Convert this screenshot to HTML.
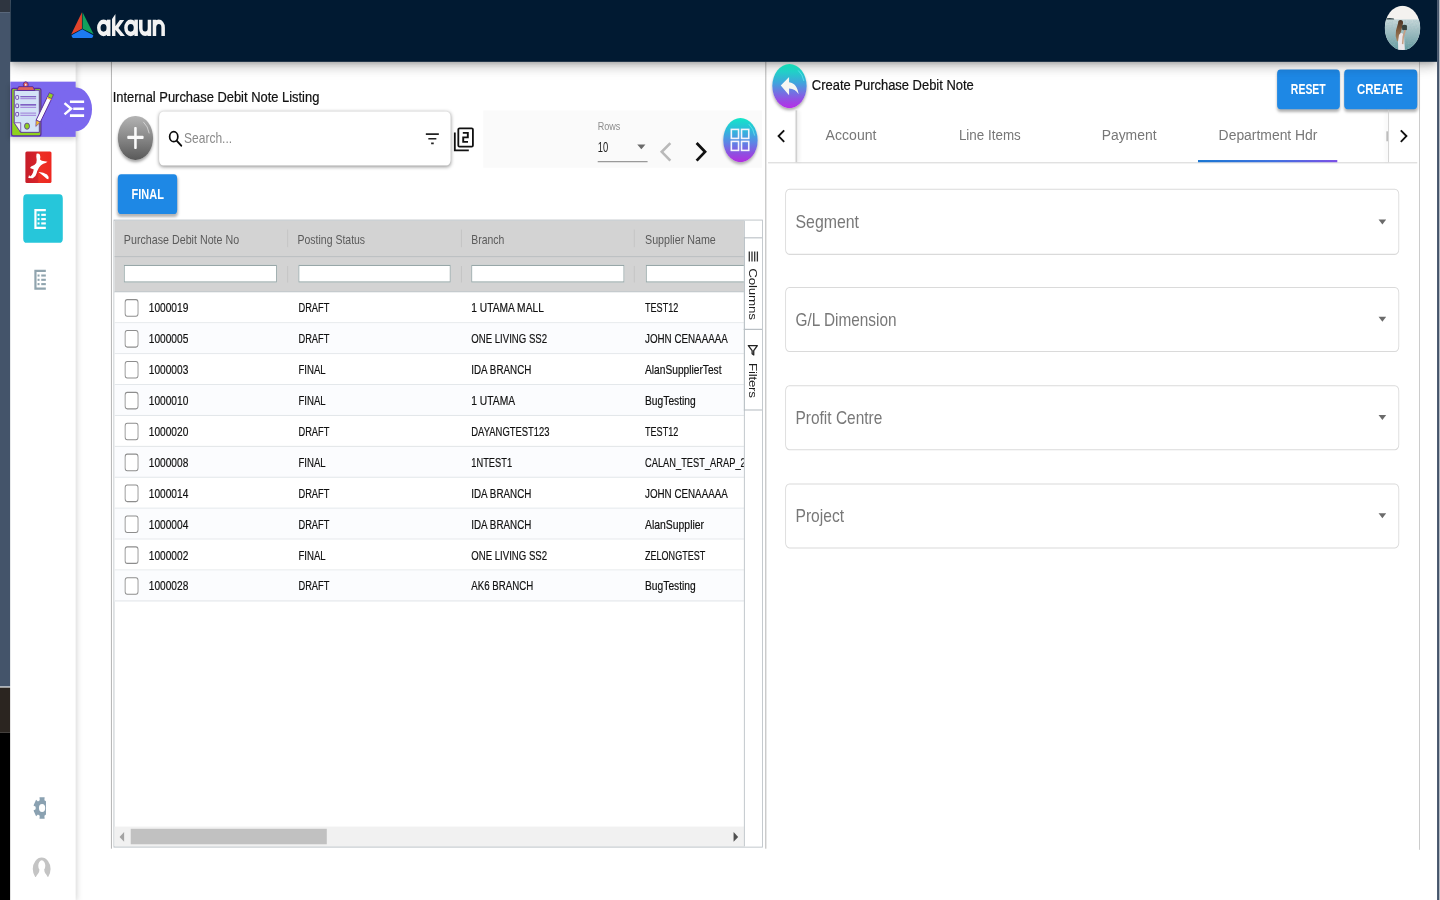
<!DOCTYPE html>
<html lang="en">
<head>
<meta charset="utf-8">
<title>Internal Purchase Debit Note Listing</title>
<style>
*{--x:initial;--y:initial;--w:initial;--h:initial;box-sizing:border-box}
html,body{margin:0;padding:0;width:1440px;height:900px;overflow:hidden;background:#fff;font-family:"Liberation Sans",sans-serif;color:#111}
#root{position:absolute;left:0;top:0;width:calc(1440px/.86);height:calc(900px/1.1036);transform:scale(.86,1.1036);transform-origin:0 0;--sx:.86;--sy:1.1036;overflow:hidden;background:#fff}
.p{position:absolute;left:calc(var(--x)*1px/var(--sx));top:calc(var(--y)*1px/var(--sy));width:calc(var(--w)*1px/var(--sx));height:calc(var(--h)*1px/var(--sy))}
.t{position:absolute;left:calc(var(--x)*1px/var(--sx));top:calc(var(--y)*1px/var(--sy));white-space:nowrap;line-height:1;transform-origin:0 0}
svg{display:block;overflow:visible}
.hdr{background:#011a32;box-shadow:0 3px 5px -1px rgba(0,0,0,.2),0 6px 10px 0 rgba(0,0,0,.14),0 1px 18px 0 rgba(0,0,0,.12);z-index:5;clip-path:inset(0 0 -24px 0)}
.side{background:#fff;box-shadow:1px 0 6px rgba(0,0,0,.16);z-index:3;clip-path:inset(0 -14px 0 0)}
.z4{z-index:4}.z6{z-index:6}
.vline{background:#a9a9a9}
.btn{background:#1e88e5;border-radius:4px;box-shadow:0 2px 3px rgba(0,0,0,.3)}
.fld{border:1px solid #dadada;border-radius:5px;background:#fff}
.row{border-bottom:1px solid #e3e7ea;background:#fff}
.row.alt{background:#fbfcfe}
.cb{border:1px solid #8d8d8d;border-radius:3px;background:#fff}
.fi{background:#fff;border:1px solid #95a5a6}
</style>
</head>
<body>
<div id="root">
<!-- window-edge strips -->
<div class="p" style="--x:0;--y:0;--w:10;--h:12;background:#2e3540"></div>
<div class="p" style="--x:0;--y:12;--w:10;--h:675;background:#44546a"></div>
<div class="p" style="--x:0;--y:687;--w:10;--h:46;background:#2b2520"></div>
<div class="p" style="--x:0;--y:733;--w:10;--h:167;background:#000"></div>
<div class="p" style="--x:1437;--y:0;--w:3;--h:900;background:#44546a"></div>
<!-- header / sidebar / dividers -->
<div id="hdr" class="p hdr" style="--x:10;--y:0;--w:1427;--h:62;"></div>
<div id="side" class="p side" style="--x:10;--y:62;--w:65.5;--h:838;"></div>
<div class="p vline" style="--x:111;--y:62;--w:1;--h:787;"></div>
<div class="p vline" style="--x:765;--y:62;--w:1.2;--h:787;"></div>
<div class="p" style="--x:1419;--y:62;--w:1;--h:788;background:#c4c4c4"></div>
<!-- ===== LIST PANEL TOOLBAR ===== -->
<span id="title" class="t" style="--x:112.8;--y:89.48;font-size:13.3px;font-weight:400;color:#111;letter-spacing:0px;transform:scaleX(1.1288);-webkit-text-stroke:.2px #111">Internal Purchase Debit Note Listing</span>
<div class="p" style="--x:483.5;--y:110.8;--w:278.5;--h:57.2;background:#fafafa"></div>
<div id="plus" class="p" style="--x:118.1;--y:115.6;--w:34.7;--h:44.2;border-radius:50%;background:linear-gradient(180deg,#b4b4b4 0%,#8c8c8c 45%,#595959 100%);box-shadow:0 2px 3px rgba(0,0,0,.35)"></div>
<div class="p" style="--x:126.9;--y:135.9;--w:17.1;--h:3.7;background:#fafafa;border-radius:1px"></div>
<div class="p" style="--x:133.9;--y:126.7;--w:3.2;--h:22.1;background:#fafafa;border-radius:1px"></div>
<svg class="p" style="--x:118.1;--y:115.6;--w:34.7;--h:44.2" viewBox="0 0 34.7 44.2" preserveAspectRatio="none"><path d="M25.5 6 Q30.3 10.5 31.4 17.5" fill="none" stroke="#e6e6e6" stroke-width=".9" opacity=".75"/></svg>
<div id="search" class="p" style="--x:158.8;--y:111.3;--w:291.7;--h:54;background:#fff;border-radius:5px;box-shadow:0 1px 4px rgba(0,0,0,.42)"></div>
<svg class="p" style="--x:167;--y:129;--w:16;--h:18" viewBox="0 0 16 18" preserveAspectRatio="none"><ellipse cx="6.9" cy="7.6" rx="4.1" ry="5" fill="none" stroke="#0b0b0b" stroke-width="1.7"/><path d="M9.8 11.6 L14.4 16.6" stroke="#0b0b0b" stroke-width="1.9" stroke-linecap="round"/></svg>
<span id="srch" class="t" style="--x:184.3;--y:130.99;font-size:13.2px;font-weight:400;color:#8a8a8a;letter-spacing:0px;transform:scaleX(1.0586);">Search...</span>
<svg class="p" style="--x:425;--y:132;--w:15;--h:13" viewBox="0 0 15 13" preserveAspectRatio="none"><path d="M1 1.6H14M3.5 6.3H11.5M6.3 11H8.9" stroke="#222" stroke-width="1.7" fill="none"/></svg>
<svg class="p" style="--x:453;--y:127;--w:21;--h:26" viewBox="0 0 21 26" preserveAspectRatio="none"><path d="M1.6 5.5V23.4H15.6" fill="none" stroke="#111" stroke-width="1.8"/><rect x="5.1" y="1.4" width="14.6" height="18.3" rx="1.2" fill="none" stroke="#111" stroke-width="1.8"/><path d="M9.6 6H14.6V10.5H10V15H14.8" fill="none" stroke="#111" stroke-width="1.9"/></svg>
<span id="rows" class="t" style="--x:597.4;--y:121.53;font-size:9.8px;font-weight:400;color:#8c8c8c;letter-spacing:0px;transform:scaleX(1.0741);">Rows</span>
<span id="ten" class="t" style="--x:597.6;--y:140.11;font-size:13px;font-weight:400;color:#222;letter-spacing:0px;transform:scaleX(0.8389);">10</span>
<svg class="p" style="--x:637.3;--y:145;--w:8.2;--h:4.8" viewBox="0 0 10 5" preserveAspectRatio="none"><path d="M0 0H10L5 5Z" fill="#6a6a6a"/></svg>
<div class="p" style="--x:598;--y:160.6;--w:50;--h:1.1;background:#8d8d8d"></div>
<svg class="p" style="--x:659;--y:141;--w:14;--h:21" viewBox="0 0 14 21" preserveAspectRatio="none"><path d="M11.6 1.8 L3 10.6 L11.6 19.4" fill="none" stroke="#b9b9b9" stroke-width="2.6"/></svg>
<svg class="p" style="--x:694;--y:141;--w:14;--h:21" viewBox="0 0 14 21" preserveAspectRatio="none"><path d="M2.6 1.8 L11 10.6 L2.6 19.4" fill="none" stroke="#111" stroke-width="2.8"/></svg>
<div id="gfab" class="p" style="--x:723.1;--y:118.6;--w:34.4;--h:44;border-radius:50%;background:linear-gradient(180deg,#12e6c8 0%,#2fb9dc 28%,#5b86e5 55%,#8f4fe0 80%,#b32ee0 100%);box-shadow:0 2px 3px rgba(0,0,0,.3)"></div>
<svg class="p" style="--x:730.5;--y:128.5;--w:20;--h:24" viewBox="0 0 20 24" preserveAspectRatio="none"><g fill="none" stroke="#f4f4fb" stroke-width="1.6"><rect x="1.2" y="1.4" width="7.2" height="9"/><rect x="11.4" y="1.4" width="7.2" height="9"/><rect x="1.2" y="13.4" width="7.2" height="9"/><rect x="11.4" y="13.4" width="7.2" height="9"/></g></svg>
<svg class="p" style="--x:723.1;--y:118.6;--w:34.4;--h:44" viewBox="0 0 34.4 44" preserveAspectRatio="none"><path d="M25.5 6 Q30.3 10.5 31.4 17.5" fill="none" stroke="#7af0f0" stroke-width=".9" opacity=".7"/></svg>
<div id="final" class="p btn" style="--x:117.4;--y:174.4;--w:59.9;--h:39.4;"></div>
<span id="finalt" class="t" style="--x:131.2;--y:186.58;font-size:13.3px;font-weight:700;color:#fff;letter-spacing:0px;transform:scaleX(0.9579);">FINAL</span>
<!-- ===== GRID ===== -->
<div id="grid" class="p" style="--x:113.4;--y:219.8;--w:649.4;--h:628;border:1px solid #b9bfc4;background:#fff"></div>
<div id="gbody" class="p" style="--x:114.3;--y:220.7;--w:630.2;--h:626;overflow:hidden">
<div class="p" style="--x:0;--y:0;--w:631;--h:70.8;background:#d3d3d3"></div>
<div class="p" style="--x:0;--y:35.6;--w:631;--h:1;background:#bcc0c3"></div>
<div class="p" style="--x:0;--y:70.2;--w:631;--h:1.2;background:#aeb5bb"></div>
<div class="p" style="--x:172.7;--y:9.3;--w:1;--h:16.8;background:#c3c3c3"></div>
<div class="p" style="--x:172.7;--y:45.3;--w:1;--h:16.2;background:#c3c3c3"></div>
<div class="p" style="--x:346.45;--y:9.3;--w:1;--h:16.8;background:#c3c3c3"></div>
<div class="p" style="--x:346.45;--y:45.3;--w:1;--h:16.2;background:#c3c3c3"></div>
<div class="p" style="--x:519.7;--y:9.3;--w:1;--h:16.8;background:#c3c3c3"></div>
<div class="p" style="--x:519.7;--y:45.3;--w:1;--h:16.2;background:#c3c3c3"></div>
<span id="gh0" class="t" style="--x:9.9;--y:11.9;font-size:12.3px;font-weight:400;color:#5a5a5a;letter-spacing:0px;transform:scaleX(1.0110);">Purchase Debit Note No</span>
<span id="gh1" class="t" style="--x:183.65;--y:11.9;font-size:12.3px;font-weight:400;color:#5a5a5a;letter-spacing:0px;transform:scaleX(0.9904);">Posting Status</span>
<span id="gh2" class="t" style="--x:357.4;--y:11.9;font-size:12.3px;font-weight:400;color:#5a5a5a;letter-spacing:0px;transform:scaleX(0.9860);">Branch</span>
<span id="gh3" class="t" style="--x:530.9;--y:11.9;font-size:12.3px;font-weight:400;color:#5a5a5a;letter-spacing:0px;transform:scaleX(1.0120);">Supplier Name</span>
<div class="p fi" style="--x:9.95;--y:44.5;--w:152.5;--h:17.8;"></div>
<div class="p fi" style="--x:183.95;--y:44.5;--w:152.5;--h:17.8;"></div>
<div class="p fi" style="--x:356.95;--y:44.5;--w:153.25;--h:17.8;"></div>
<div class="p fi" style="--x:531.2;--y:44.5;--w:152.5;--h:17.8;"></div>
<div class="p row" style="--x:0;--y:71.5;--w:631;--h:30.9;"><div class="p cb" style="--x:10.2;--y:6.9;--w:13.8;--h:17.6;"></div><span id="c0_0" class="t" style="--x:34.55;--y:9.6;font-size:12.3px;font-weight:400;color:#101010;letter-spacing:0px;transform:scaleX(0.9604);-webkit-text-stroke:.18px #101010">1000019</span><span id="c0_1" class="t" style="--x:183.8;--y:9.6;font-size:12.3px;font-weight:400;color:#101010;letter-spacing:0px;transform:scaleX(0.8804);-webkit-text-stroke:.18px #101010">DRAFT</span><span id="c0_2" class="t" style="--x:357.3;--y:9.6;font-size:12.3px;font-weight:400;color:#101010;letter-spacing:0px;transform:scaleX(0.9668);-webkit-text-stroke:.18px #101010">1 UTAMA MALL</span><span id="c0_3" class="t" style="--x:530.8;--y:9.6;font-size:12.3px;font-weight:400;color:#101010;letter-spacing:0px;transform:scaleX(0.8582);-webkit-text-stroke:.18px #101010">TEST12</span></div>
<div class="p row alt" style="--x:0;--y:102.4;--w:631;--h:30.9;"><div class="p cb" style="--x:10.2;--y:6.9;--w:13.8;--h:17.6;"></div><span id="c1_0" class="t" style="--x:34.55;--y:9.6;font-size:12.3px;font-weight:400;color:#101010;letter-spacing:0px;transform:scaleX(0.9604);-webkit-text-stroke:.18px #101010">1000005</span><span id="c1_1" class="t" style="--x:183.8;--y:9.6;font-size:12.3px;font-weight:400;color:#101010;letter-spacing:0px;transform:scaleX(0.8804);-webkit-text-stroke:.18px #101010">DRAFT</span><span id="c1_2" class="t" style="--x:357.3;--y:9.6;font-size:12.3px;font-weight:400;color:#101010;letter-spacing:0px;transform:scaleX(0.9081);-webkit-text-stroke:.18px #101010">ONE LIVING SS2</span><span id="c1_3" class="t" style="--x:530.8;--y:9.6;font-size:12.3px;font-weight:400;color:#101010;letter-spacing:0px;transform:scaleX(0.9268);-webkit-text-stroke:.18px #101010">JOHN CENAAAAA</span></div>
<div class="p row" style="--x:0;--y:133.3;--w:631;--h:30.9;"><div class="p cb" style="--x:10.2;--y:6.9;--w:13.8;--h:17.6;"></div><span id="c2_0" class="t" style="--x:34.55;--y:9.6;font-size:12.3px;font-weight:400;color:#101010;letter-spacing:0px;transform:scaleX(0.9604);-webkit-text-stroke:.18px #101010">1000003</span><span id="c2_1" class="t" style="--x:183.8;--y:9.6;font-size:12.3px;font-weight:400;color:#101010;letter-spacing:0px;transform:scaleX(0.9104);-webkit-text-stroke:.18px #101010">FINAL</span><span id="c2_2" class="t" style="--x:357.3;--y:9.6;font-size:12.3px;font-weight:400;color:#101010;letter-spacing:0px;transform:scaleX(0.9288);-webkit-text-stroke:.18px #101010">IDA BRANCH</span><span id="c2_3" class="t" style="--x:530.8;--y:9.6;font-size:12.3px;font-weight:400;color:#101010;letter-spacing:0px;transform:scaleX(0.9645);-webkit-text-stroke:.18px #101010">AlanSupplierTest</span></div>
<div class="p row alt" style="--x:0;--y:164.2;--w:631;--h:30.9;"><div class="p cb" style="--x:10.2;--y:6.9;--w:13.8;--h:17.6;"></div><span id="c3_0" class="t" style="--x:34.55;--y:9.6;font-size:12.3px;font-weight:400;color:#101010;letter-spacing:0px;transform:scaleX(0.9604);-webkit-text-stroke:.18px #101010">1000010</span><span id="c3_1" class="t" style="--x:183.8;--y:9.6;font-size:12.3px;font-weight:400;color:#101010;letter-spacing:0px;transform:scaleX(0.9104);-webkit-text-stroke:.18px #101010">FINAL</span><span id="c3_2" class="t" style="--x:357.3;--y:9.6;font-size:12.3px;font-weight:400;color:#101010;letter-spacing:0px;transform:scaleX(0.9720);-webkit-text-stroke:.18px #101010">1 UTAMA</span><span id="c3_3" class="t" style="--x:530.8;--y:9.6;font-size:12.3px;font-weight:400;color:#101010;letter-spacing:0px;transform:scaleX(0.9707);-webkit-text-stroke:.18px #101010">BugTesting</span></div>
<div class="p row" style="--x:0;--y:195.1;--w:631;--h:30.9;"><div class="p cb" style="--x:10.2;--y:6.9;--w:13.8;--h:17.6;"></div><span id="c4_0" class="t" style="--x:34.55;--y:9.6;font-size:12.3px;font-weight:400;color:#101010;letter-spacing:0px;transform:scaleX(0.9604);-webkit-text-stroke:.18px #101010">1000020</span><span id="c4_1" class="t" style="--x:183.8;--y:9.6;font-size:12.3px;font-weight:400;color:#101010;letter-spacing:0px;transform:scaleX(0.8804);-webkit-text-stroke:.18px #101010">DRAFT</span><span id="c4_2" class="t" style="--x:357.3;--y:9.6;font-size:12.3px;font-weight:400;color:#101010;letter-spacing:0px;transform:scaleX(0.8920);-webkit-text-stroke:.18px #101010">DAYANGTEST123</span><span id="c4_3" class="t" style="--x:530.8;--y:9.6;font-size:12.3px;font-weight:400;color:#101010;letter-spacing:0px;transform:scaleX(0.8582);-webkit-text-stroke:.18px #101010">TEST12</span></div>
<div class="p row alt" style="--x:0;--y:226.0;--w:631;--h:30.9;"><div class="p cb" style="--x:10.2;--y:6.9;--w:13.8;--h:17.6;"></div><span id="c5_0" class="t" style="--x:34.55;--y:9.6;font-size:12.3px;font-weight:400;color:#101010;letter-spacing:0px;transform:scaleX(0.9604);-webkit-text-stroke:.18px #101010">1000008</span><span id="c5_1" class="t" style="--x:183.8;--y:9.6;font-size:12.3px;font-weight:400;color:#101010;letter-spacing:0px;transform:scaleX(0.9104);-webkit-text-stroke:.18px #101010">FINAL</span><span id="c5_2" class="t" style="--x:357.3;--y:9.6;font-size:12.3px;font-weight:400;color:#101010;letter-spacing:0px;transform:scaleX(0.8784);-webkit-text-stroke:.18px #101010">1NTEST1</span><span id="c5_3" class="t" style="--x:530.8;--y:9.6;font-size:12.3px;font-weight:400;color:#101010;letter-spacing:0px;transform:scaleX(0.8794);-webkit-text-stroke:.18px #101010">CALAN_TEST_ARAP_2</span></div>
<div class="p row" style="--x:0;--y:256.9;--w:631;--h:30.9;"><div class="p cb" style="--x:10.2;--y:6.9;--w:13.8;--h:17.6;"></div><span id="c6_0" class="t" style="--x:34.55;--y:9.6;font-size:12.3px;font-weight:400;color:#101010;letter-spacing:0px;transform:scaleX(0.9604);-webkit-text-stroke:.18px #101010">1000014</span><span id="c6_1" class="t" style="--x:183.8;--y:9.6;font-size:12.3px;font-weight:400;color:#101010;letter-spacing:0px;transform:scaleX(0.8804);-webkit-text-stroke:.18px #101010">DRAFT</span><span id="c6_2" class="t" style="--x:357.3;--y:9.6;font-size:12.3px;font-weight:400;color:#101010;letter-spacing:0px;transform:scaleX(0.9288);-webkit-text-stroke:.18px #101010">IDA BRANCH</span><span id="c6_3" class="t" style="--x:530.8;--y:9.6;font-size:12.3px;font-weight:400;color:#101010;letter-spacing:0px;transform:scaleX(0.9268);-webkit-text-stroke:.18px #101010">JOHN CENAAAAA</span></div>
<div class="p row alt" style="--x:0;--y:287.8;--w:631;--h:30.9;"><div class="p cb" style="--x:10.2;--y:6.9;--w:13.8;--h:17.6;"></div><span id="c7_0" class="t" style="--x:34.55;--y:9.6;font-size:12.3px;font-weight:400;color:#101010;letter-spacing:0px;transform:scaleX(0.9604);-webkit-text-stroke:.18px #101010">1000004</span><span id="c7_1" class="t" style="--x:183.8;--y:9.6;font-size:12.3px;font-weight:400;color:#101010;letter-spacing:0px;transform:scaleX(0.8804);-webkit-text-stroke:.18px #101010">DRAFT</span><span id="c7_2" class="t" style="--x:357.3;--y:9.6;font-size:12.3px;font-weight:400;color:#101010;letter-spacing:0px;transform:scaleX(0.9288);-webkit-text-stroke:.18px #101010">IDA BRANCH</span><span id="c7_3" class="t" style="--x:530.8;--y:9.6;font-size:12.3px;font-weight:400;color:#101010;letter-spacing:0px;transform:scaleX(0.9845);-webkit-text-stroke:.18px #101010">AlanSupplier</span></div>
<div class="p row" style="--x:0;--y:318.7;--w:631;--h:30.9;"><div class="p cb" style="--x:10.2;--y:6.9;--w:13.8;--h:17.6;"></div><span id="c8_0" class="t" style="--x:34.55;--y:9.6;font-size:12.3px;font-weight:400;color:#101010;letter-spacing:0px;transform:scaleX(0.9604);-webkit-text-stroke:.18px #101010">1000002</span><span id="c8_1" class="t" style="--x:183.8;--y:9.6;font-size:12.3px;font-weight:400;color:#101010;letter-spacing:0px;transform:scaleX(0.9104);-webkit-text-stroke:.18px #101010">FINAL</span><span id="c8_2" class="t" style="--x:357.3;--y:9.6;font-size:12.3px;font-weight:400;color:#101010;letter-spacing:0px;transform:scaleX(0.9081);-webkit-text-stroke:.18px #101010">ONE LIVING SS2</span><span id="c8_3" class="t" style="--x:530.8;--y:9.6;font-size:12.3px;font-weight:400;color:#101010;letter-spacing:0px;transform:scaleX(0.8550);-webkit-text-stroke:.18px #101010">ZELONGTEST</span></div>
<div class="p row alt" style="--x:0;--y:349.6;--w:631;--h:30.9;"><div class="p cb" style="--x:10.2;--y:6.9;--w:13.8;--h:17.6;"></div><span id="c9_0" class="t" style="--x:34.55;--y:9.6;font-size:12.3px;font-weight:400;color:#101010;letter-spacing:0px;transform:scaleX(0.9604);-webkit-text-stroke:.18px #101010">1000028</span><span id="c9_1" class="t" style="--x:183.8;--y:9.6;font-size:12.3px;font-weight:400;color:#101010;letter-spacing:0px;transform:scaleX(0.8804);-webkit-text-stroke:.18px #101010">DRAFT</span><span id="c9_2" class="t" style="--x:357.3;--y:9.6;font-size:12.3px;font-weight:400;color:#101010;letter-spacing:0px;transform:scaleX(0.9179);-webkit-text-stroke:.18px #101010">AK6 BRANCH</span><span id="c9_3" class="t" style="--x:530.8;--y:9.6;font-size:12.3px;font-weight:400;color:#101010;letter-spacing:0px;transform:scaleX(0.9707);-webkit-text-stroke:.18px #101010">BugTesting</span></div>
<div class="p" style="--x:0;--y:605.5;--w:631;--h:20.5;background:#f1f1f1"></div>
<div id="thumb" class="p" style="--x:16.2;--y:608;--w:196.5;--h:15.8;background:#c1c1c1"></div>
<svg class="p" style="--x:5.5;--y:611;--w:4.6;--h:9.6" viewBox="0 0 5 10" preserveAspectRatio="none"><path d="M5 0V10L0 5Z" fill="#a3a3a3"/></svg>
<svg class="p" style="--x:619.6;--y:611;--w:4.6;--h:9.6" viewBox="0 0 5 10" preserveAspectRatio="none"><path d="M0 0V10L5 5Z" fill="#505050"/></svg>
</div>
<div class="p" style="--x:744.2;--y:220.7;--w:18;--h:626;border-left:1px solid #b9bfc4;background:#fff"></div>
<div class="p" style="--x:744.2;--y:237.8;--w:18;--h:92.6;border:1px solid #b9bfc4;border-right:0"></div>
<div class="p" style="--x:744.2;--y:329.4;--w:18;--h:81;border:1px solid #b9bfc4;border-right:0"></div>
<svg class="p" style="--x:748;--y:252;--w:10.4;--h:10" viewBox="0 0 10.4 10" preserveAspectRatio="none"><path d="M1.1 0V10M3.8 0V10M6.5 0V10M9.2 0V10" stroke="#333" stroke-width="1.3" fill="none"/></svg>
<span id="colt" class="t" style="--x:747.3;--y:268.2;font-size:12.2px;font-weight:400;color:#1d1d1d;letter-spacing:-0.2px;transform:scaleX(1.0000);writing-mode:vertical-rl">Columns</span>
<svg class="p" style="--x:747.6;--y:344.5;--w:11;--h:12" viewBox="0 0 11 12" preserveAspectRatio="none"><path d="M1 1.3H10L6.4 6.4V10.6L4.8 9.4V6.4Z" fill="none" stroke="#222" stroke-width="1.3" stroke-linejoin="round"/></svg>
<span id="filt" class="t" style="--x:747.3;--y:362.6;font-size:12.2px;font-weight:400;color:#1d1d1d;letter-spacing:-0.25px;transform:scaleX(1.0000);writing-mode:vertical-rl">Filters</span>
<!-- ===== RIGHT PANEL ===== -->
<div id="back" class="p z6" style="--x:772.6;--y:63.6;--w:34.5;--h:44.4;border-radius:50%;background:linear-gradient(180deg,#14dcb4 0%,#22cfc8 18%,#3ea6dc 42%,#6c78e2 62%,#9a48e4 84%,#b62ee8 100%);box-shadow:0 2px 3px rgba(0,0,0,.32)"></div>
<svg id="backi" class="p z6" style="--x:772.6;--y:63.8;--w:34.6;--h:44.2" viewBox="0 0 34.6 44.2" preserveAspectRatio="none"><path d="M8.5 21.6 L16.8 13 V18.2 C22.5 18.8 25.5 23.5 26.4 30.3 C24 26.5 21.2 24.7 16.8 24.5 V31.2 Z" fill="#f6f6f2"/><path d="M26 6.5 Q30.5 10.5 31.6 17" fill="none" stroke="#5fe6ee" stroke-width="1" opacity=".8"/></svg>
<span id="cpdn" class="t" style="--x:812.0;--y:78.48;font-size:13.3px;font-weight:400;color:#111;letter-spacing:0px;transform:scaleX(1.1325);-webkit-text-stroke:.2px #111">Create Purchase Debit Note</span>
<div id="reset" class="p btn" style="--x:1277;--y:69.5;--w:62.5;--h:39.3;"></div>
<div id="create" class="p btn" style="--x:1344.5;--y:69.5;--w:72.5;--h:39.3;"></div>
<span id="resett" class="t" style="--x:1290.9;--y:81.53;font-size:13.3px;font-weight:700;color:#fff;letter-spacing:0px;transform:scaleX(0.9140);">RESET</span>
<span id="createt" class="t" style="--x:1357.4;--y:81.53;font-size:13.3px;font-weight:700;color:#fff;letter-spacing:0px;transform:scaleX(0.9932);">CREATE</span>
<div class="p" style="--x:768;--y:162;--w:649;--h:1.1;background:#d9d9d9"></div>
<div class="p" style="--x:795.8;--y:110;--w:1;--h:52;background:#d0d0d0;box-shadow:2px 0 4px rgba(0,0,0,.12)"></div>
<svg class="p" style="--x:777;--y:129;--w:9;--h:14" viewBox="0 0 9 14" preserveAspectRatio="none"><path d="M7.6 1.2 L2 7 L7.6 12.8" fill="none" stroke="#111" stroke-width="1.9"/></svg>
<span id="tab0" class="t" style="--x:825.3;--y:128.45;font-size:13.5px;font-weight:400;color:#777;letter-spacing:0px;transform:scaleX(1.2126);">Account</span>
<span id="tab1" class="t" style="--x:959.1;--y:128.45;font-size:13.5px;font-weight:400;color:#777;letter-spacing:0px;transform:scaleX(1.1551);">Line Items</span>
<span id="tab2" class="t" style="--x:1101.6;--y:128.45;font-size:13.5px;font-weight:400;color:#777;letter-spacing:0px;transform:scaleX(1.1975);">Payment</span>
<span id="tab3" class="t" style="--x:1218.6;--y:128.45;font-size:13.5px;font-weight:400;color:#777;letter-spacing:0px;transform:scaleX(1.1970);">Department Hdr</span>
<div id="inkbar" class="p" style="--x:1198.25;--y:159.8;--w:139.25;--h:2.3;background:linear-gradient(90deg,#1976d2,#3f6fe0 55%,#7b4fe6)"></div>
<div class="p" style="--x:1388.3;--y:110;--w:1;--h:52;background:#d0d0d0;box-shadow:-2px 0 4px rgba(0,0,0,.12)"></div>
<div class="p" style="--x:1386.6;--y:131;--w:1.2;--h:10;background:#bdbdbd"></div>
<svg class="p" style="--x:1399.5;--y:129;--w:9;--h:14" viewBox="0 0 9 14" preserveAspectRatio="none"><path d="M1.6 1.2 L7.2 7 L1.6 12.8" fill="none" stroke="#111" stroke-width="1.9"/></svg>
<div class="p fld" style="--x:785.4;--y:189.25;--w:614.2;--h:65.3;"></div>
<span id="lbSeg" class="t" style="--x:795.2;--y:213.78;font-size:16.0px;font-weight:400;color:#787878;letter-spacing:0px;transform:scaleX(1.1534);">Segment</span>
<svg class="p" style="--x:1378.2;--y:219.25;--w:7.6;--h:5" viewBox="0 0 10 5" preserveAspectRatio="none"><path d="M0 0H10L5 5Z" fill="#6b6b6b"/></svg>
<div class="p fld" style="--x:785.4;--y:287;--w:614.2;--h:65.3;"></div>
<span id="lbGL" class="t" style="--x:795.2;--y:311.53;font-size:16.0px;font-weight:400;color:#787878;letter-spacing:0px;transform:scaleX(1.1164);">G/L Dimension</span>
<svg class="p" style="--x:1378.2;--y:317;--w:7.6;--h:5" viewBox="0 0 10 5" preserveAspectRatio="none"><path d="M0 0H10L5 5Z" fill="#6b6b6b"/></svg>
<div class="p fld" style="--x:785.4;--y:385.4;--w:614.2;--h:65.3;"></div>
<span id="lbPro" class="t" style="--x:795.2;--y:409.93;font-size:16.0px;font-weight:400;color:#787878;letter-spacing:0px;transform:scaleX(1.1236);">Profit Centre</span>
<svg class="p" style="--x:1378.2;--y:415.4;--w:7.6;--h:5" viewBox="0 0 10 5" preserveAspectRatio="none"><path d="M0 0H10L5 5Z" fill="#6b6b6b"/></svg>
<div class="p fld" style="--x:785.4;--y:483.2;--w:614.2;--h:65.3;"></div>
<span id="lbPro" class="t" style="--x:795.2;--y:507.73;font-size:16.0px;font-weight:400;color:#787878;letter-spacing:0px;transform:scaleX(1.1333);">Project</span>
<svg class="p" style="--x:1378.2;--y:513.2;--w:7.6;--h:5" viewBox="0 0 10 5" preserveAspectRatio="none"><path d="M0 0H10L5 5Z" fill="#6b6b6b"/></svg>
<!-- ===== HEADER CONTENT ===== -->
<svg id="tri" class="p z6" style="--x:70;--y:11;--w:26;--h:28" viewBox="0 0 26 28" preserveAspectRatio="none"><path d="M12.3 1.2 L1.5 23.5 L12.3 17.6 Z" fill="#e0452c"/><path d="M12.9 1.2 L24 23.3 L12.9 17.6 Z" fill="#12a05c"/><path d="M12.6 18.1 L1.9 24.2 Q2.1 27.1 4.6 27.1 H21 Q23.5 27.1 23.6 24.2 Z" fill="#1d7bf2"/></svg>
<svg class="p z6" style="--x:96;--y:12;--w:70;--h:26" viewBox="0 0 81.40 23.56" preserveAspectRatio="none"><g fill="none" stroke="#f2f2f2" stroke-width="4.1"><circle cx="8.43" cy="14.23" r="5.55"/><path d="M14.42 6.8V21.66"/><circle cx="40" cy="14.23" r="5.55"/><path d="M46.28 6.8V21.66"/><path d="M51.7 6.8V14.6A5.05 5.05 0 0 0 61.8 14.6M61.8 6.8V21.66"/><path d="M67.6 21.66V6.8M67.6 13.85A5.05 5.05 0 0 1 77.7 13.85V21.66"/></g><path d="M18.26 6.3 L22.2 1.8 V12.9 L27.3 7.07 H32.4 L25.7 14.4 L33.3 21.66 H28.2 L22.2 16 V21.66 H18.26 Z" fill="#f2f2f2"/></svg>
<svg id="avatar" class="p z6" style="--x:1384.6;--y:5.6;--w:36;--h:45" viewBox="0 0 36 45" preserveAspectRatio="none"><defs><clipPath id="avc"><ellipse cx="17.9" cy="22.4" rx="17.7" ry="22.2"/></clipPath><linearGradient id="sea" x1="0" y1="0" x2="0" y2="1"><stop offset="0" stop-color="#c9d9db"/><stop offset=".3" stop-color="#a9c3c7"/><stop offset=".7" stop-color="#7fa9ae"/><stop offset="1" stop-color="#5c979e"/></linearGradient><linearGradient id="hair" x1="0" y1="0" x2="0" y2="1"><stop offset="0" stop-color="#4a3324"/><stop offset=".45" stop-color="#7d5a3c"/><stop offset="1" stop-color="#a98763"/></linearGradient><filter id="nz" x="0" y="0" width="100%" height="100%"><feTurbulence type="fractalNoise" baseFrequency=".55 .9" numOctaves="2" seed="4"/><feColorMatrix values="0 0 0 0 .3  0 0 0 0 .5  0 0 0 0 .52  0 0 0 -1.6 1.0"/></filter></defs><g clip-path="url(#avc)"><rect width="36" height="45" fill="#f4f2ef"/><rect y="13.8" width="36" height="32" fill="url(#sea)"/><rect y="15" width="36" height="31" filter="url(#nz)" opacity=".55"/><path d="M1.4 13.9 L2.2 12.8 Q5 11.9 9.2 12.9 L9.6 14.1 Z" fill="#2f4347"/><path d="M13.5 17.5 Q13.4 14.6 15.9 14.4 Q18.6 14.5 18.5 17.6 L17.4 22 L16.5 26 L14.6 30.5 L14.4 36.2 L12.3 35.4 Q10.4 30 11.4 25 Z" fill="url(#hair)"/><path d="M14.4 29.6 Q15.6 27 17.6 27.6 L19.4 30.5 L20.3 45 H13.6 L13.4 36 Z" fill="#ece7ea"/><path d="M17.3 19.9 Q19.6 18.6 22.4 19.9 L22.3 24.4 Q20 25.4 17.6 24.2 Z" fill="#36433f"/><path d="M19.6 24.6 L21.4 24.8 L19.4 32 L18.8 38.8 L17.3 38.6 L17.9 31 Z" fill="#c49f86"/></g></svg>
<!-- ===== SIDEBAR ICONS ===== -->
<div id="band" class="p z4" style="--x:10;--y:81.6;--w:65.6;--h:55.2;background:#7b68ee;box-shadow:0 3px 5px rgba(0,0,0,.18)"></div>
<div id="bump" class="p z4" style="--x:57.3;--y:87;--w:34.4;--h:44;background:#7b68ee;border-radius:50%"></div>
<svg id="clipb" class="p z4" style="--x:10;--y:80;--w:44;--h:58" viewBox="0 0 44 58" preserveAspectRatio="none"><rect x="1.2" y="8.9" width="29.4" height="47.6" rx="2" fill="#8fd11f" stroke="#5b2d9e" stroke-width="1.3"/><path d="M3.9 10.8H29V52.9H10.4L3.9 43.3Z" fill="#d3e3f6" stroke="#5b2d9e" stroke-width=".9"/><path d="M3.9 43.3H10.4V52.9Z" fill="#f1f1f1" stroke="#5b2d9e" stroke-width=".7"/><ellipse cx="15.4" cy="5.4" rx="2.5" ry="3" fill="#e0625b" stroke="#5b2d9e" stroke-width="1"/><ellipse cx="15.4" cy="5.2" rx=".8" ry="1" fill="#e9e9f7"/><path d="M8.3 7.2H22.6L24.6 11H6.5Z" fill="#e0625b" stroke="#5b2d9e" stroke-width="1"/><g stroke="#5b2d9e" stroke-width=".8" fill="#e6ecfa"><rect x="5.4" y="16.2" width="2.9" height="3.6" rx=".6"/><rect x="5.4" y="24.6" width="2.9" height="3.6" rx=".6"/><rect x="5.4" y="33" width="2.9" height="3.6" rx=".6"/></g><path d="M10 17.3H25.8M10 25.4H25.8" stroke="#6437b3" stroke-width="1.1"/><path d="M10 19.2H25.8M10 27.9H25.8M10 33.7H25.8M10 35.9H25.8" stroke="#a890dd" stroke-width="1.2"/><ellipse cx="16.7" cy="46.7" rx="2.5" ry="3.1" fill="#8fd11f" stroke="#5b2d9e" stroke-width=".8"/><path d="M37.1 17.3L41.3 19.3L30 42.7L25.8 40.7Z" fill="#fbfbfb" stroke="#5b2d9e" stroke-width="1"/><path d="M37.1 17.3L41.3 19.3L43.2 15.2L39 13.2Z" fill="#8fd11f" stroke="#5b2d9e" stroke-width=".8"/><path d="M36.7 18.2L40.9 20.2" stroke="#f5c542" stroke-width="1.2"/><path d="M25.8 40.7L30 42.7L25.5 47Z" fill="#f5c02e" stroke="#5b2d9e" stroke-width=".6"/></svg>
<svg id="menu" class="p z4" style="--x:62;--y:98;--w:24;--h:20" viewBox="0 0 24 20" preserveAspectRatio="none"><path d="M8 3.5H22.2M11.3 10.5H22.2M8 17.4H22.2" stroke="#fff" stroke-width="2.6" fill="none"/><path d="M2.6 4.9L9.2 10.5L2.6 16.2" stroke="#fff" stroke-width="2.4" fill="none"/></svg>
<svg id="redi" class="p z4" style="--x:20;--y:145;--w:40;--h:45" viewBox="0 0 800 900" preserveAspectRatio="none"><defs><linearGradient id="rg" x1="0" y1="0" x2="1" y2="0"><stop offset="0" stop-color="#c61d29"/><stop offset=".46" stop-color="#d8232a"/><stop offset=".52" stop-color="#ec3024"/><stop offset="1" stop-color="#ee2720"/></linearGradient></defs><rect x="112" y="137" width="522" height="632" rx="30" fill="url(#rg)"/><path d="M335 185 Q370 172 400 200 L412 250 L405 300 L440 325 L555 345 Q520 372 470 385 Q420 410 385 460 Q350 520 335 580 Q320 650 260 672 L170 668 L185 610 L205 640 Q250 610 265 560 L280 500 L205 470 L225 440 Q300 420 330 370 Q345 300 330 240 Z" fill="#fff"/><path d="M375 548 Q470 545 545 600 Q588 640 572 692 L545 690 Q480 630 375 548 Z" fill="#fff"/></svg>
<div id="tile" class="p z4" style="--x:23;--y:194;--w:39.4;--h:49;background:#26c6da;border-radius:4px"></div>
<svg class="p z4" style="--x:33.6;--y:208.4;--w:13;--h:21" viewBox="0 0 13 21" preserveAspectRatio="none"><path d="M12.3 1.6H1.9V19.4H12.3" fill="none" stroke="#fff" stroke-width="2.2"/><g fill="#fff"><rect x="4" y="5.2" width="2" height="2.1"/><rect x="4" y="9.5" width="2" height="2.1"/><rect x="4" y="13.8" width="2" height="2.1"/><rect x="7.7" y="5.2" width="4.6" height="2.1"/><rect x="7.7" y="9.5" width="4.6" height="2.1"/><rect x="7.7" y="13.8" width="4.6" height="2.1"/></g></svg>
<svg class="p z4" style="--x:33.6;--y:269.2;--w:13;--h:21" viewBox="0 0 13 21" preserveAspectRatio="none"><path d="M12.3 1.6H1.9V19.4H12.3" fill="none" stroke="#90a4ae" stroke-width="2.2"/><g fill="#90a4ae"><rect x="4" y="5.2" width="2" height="2.1"/><rect x="4" y="9.5" width="2" height="2.1"/><rect x="4" y="13.8" width="2" height="2.1"/><rect x="7.7" y="5.2" width="4.6" height="2.1"/><rect x="7.7" y="9.5" width="4.6" height="2.1"/><rect x="7.7" y="13.8" width="4.6" height="2.1"/></g></svg>
<svg id="gear" class="p z4" style="--x:33;--y:796;--w:14;--h:24" viewBox="0 0 14 24" preserveAspectRatio="none"><defs><clipPath id="gc"><rect x="0" y="0" width="13.3" height="24"/></clipPath></defs><g clip-path="url(#gc)"><path d="M11.97 1.49 L6.83 1.49 L7.07 4.49 L5.30 5.80 L3.40 4.04 L0.83 9.76 L2.97 10.99 L2.97 13.61 L0.83 14.84 L3.40 20.56 L5.30 18.80 L7.07 20.11 L6.83 23.11 L11.97 23.11 L11.73 20.11 L13.50 18.80 L15.40 20.56 L17.97 14.84 L15.83 13.61 L15.83 10.99 L17.97 9.76 L15.40 4.04 L13.50 5.80 L11.73 4.49Z" fill="#8aa1b1"/><ellipse cx="9.4" cy="12.3" rx="3.1" ry="3.9" fill="#fff"/></g></svg>
<svg id="person" class="p z4" style="--x:33;--y:857.5;--w:18;--h:19.5" viewBox="0 0 18 19.5" preserveAspectRatio="none"><defs><clipPath id="pc"><rect x="-1" y="-1" width="20" height="20.6"/></clipPath></defs><g clip-path="url(#pc)"><ellipse cx="9" cy="11.6" rx="8.9" ry="11.5" fill="#c4c4c4"/><ellipse cx="9.1" cy="8.2" rx="3.5" ry="5.4" fill="#fff"/><path d="M6.7 12.6 C6.7 15.5 4.6 17 3 19.8 L2 24 H16 L15.2 19.8 C13.7 17 11.6 15.5 11.6 12.6 Z" fill="#fff"/></g></svg>
</div>
</body>
</html>
